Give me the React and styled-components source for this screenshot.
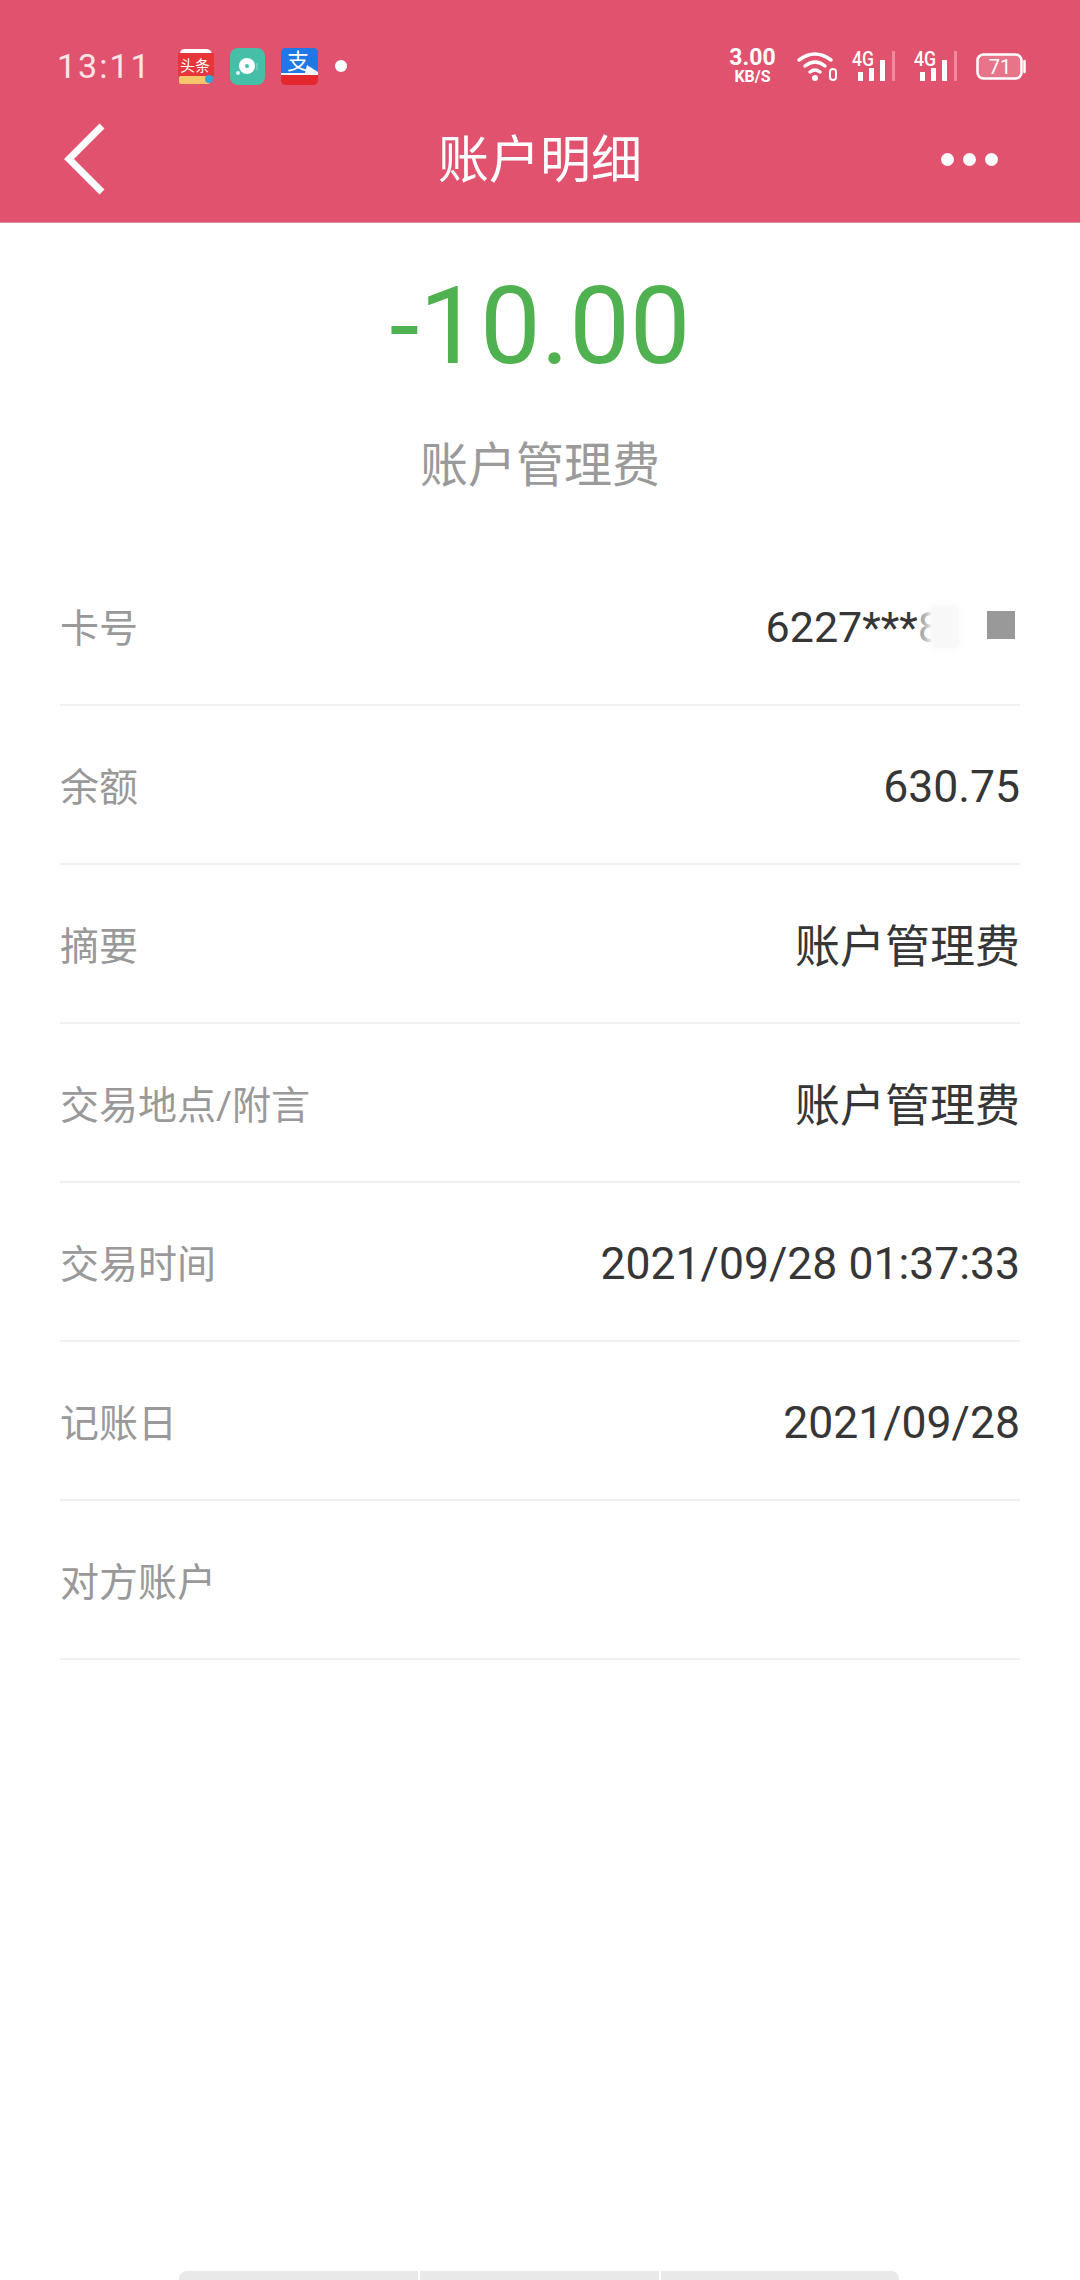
import React from 'react';
import styled, { createGlobalStyle } from 'styled-components';

const GlobalStyle = createGlobalStyle`
  html, body {
    margin: 0;
    padding: 0;
    background: #fff;
    font-family: Roboto, "Noto Sans CJK SC", sans-serif;
  }
`;

const Page = styled.div`
  width: 1080px;
  height: 2280px;
  display: flex;
  flex-direction: column;
  overflow: hidden;
  background: #fff;
`;

const Header = styled.header`
  height: 222px;
  flex: none;
  background: #e0526d;
  color: #fff;
  border-bottom: 1px solid #d0929e;
`;

const StatusBar = styled.div`
  height: 100px;
  box-sizing: border-box;
  padding: 48px 54px 16px 57px;
  display: flex;
  align-items: center;
  justify-content: space-between;
`;

const StatusLeft = styled.div`
  display: flex;
  align-items: center;
  gap: 16px;
`;

const StatusRight = styled.div`
  display: flex;
  align-items: center;
  gap: 19px;
`;

const Clock = styled.span`
  width: 104px;
  font-size: 34px;
  letter-spacing: 2px;
  color: #fbe4e8;
`;

const NotifyDot = styled.span`
  width: 12px;
  height: 12px;
  margin-left: 1px;
  border-radius: 50%;
  background: #fff;
`;

const Speed = styled.div`
  width: 47px;
  margin-right: 2px;
  display: flex;
  flex-direction: column;
  align-items: center;
  font-weight: 700;
`;

const SpeedValue = styled.span`
  font-size: 23px;
  line-height: 22px;
`;

const SpeedUnit = styled.span`
  font-size: 16px;
  line-height: 16px;
`;

const IconSvg = styled.svg`
  overflow: visible;
  flex: none;
`;

const WifiSvg = styled(IconSvg)`
  margin-right: -5px;
`;

const NavBar = styled.nav`
  height: 118px;
  box-sizing: border-box;
  padding: 0 82px;
  display: grid;
  grid-template-columns: 1fr auto 1fr;
  align-items: center;
`;

const BackSvg = styled(IconSvg)`
  margin-left: -19px;
`;

const Title = styled.h1`
  margin: 0;
  font-size: 51px;
  font-weight: 400;
  line-height: 60px;
  transform: translateY(2px);
`;

const Dots = styled.div`
  justify-self: end;
  display: flex;
  gap: 9px;
`;

const Dot = styled.span`
  width: 13px;
  height: 13px;
  border-radius: 50%;
  background: #fff;
`;

const Amount = styled.div`
  margin-top: 43px;
  text-align: center;
  font-size: 108px;
  line-height: 120px;
  color: #4fb150;
`;

const Subject = styled.div`
  margin-top: 50px;
  text-align: center;
  font-size: 48px;
  line-height: 60px;
  color: #9a9a9a;
`;

const Details = styled.div`
  margin: 51px 60px 0;
`;

const Row = styled.div`
  height: 159px;
  box-sizing: border-box;
  padding-top: 3px;
  display: flex;
  align-items: center;
  justify-content: space-between;
  border-bottom: 2px solid #f0f0f0;
`;

const Label = styled.span`
  margin-bottom: 4px;
  font-size: 39px;
  color: #999;
`;

const Value = styled.span`
  margin: ${(p) => (p.$cjk ? '0 0 4px' : '2px 0 0')};
  font-size: ${(p) => (p.$cjk ? 45 : 44.5)}px;
  color: #363636;
`;

const CardNumber = styled.div`
  position: relative;
  display: flex;
  align-items: center;
  color: #363636;
  font-size: 43px;
`;

const Smudge = styled.span`
  position: absolute;
  left: 165px;
  top: 4px;
  width: 28px;
  height: 42px;
  background: #f8f8f8;
  border-radius: 6px;
  box-shadow: 0 0 6px 3px #fbfbfb;
`;

const CardDigit = styled.span`
  margin-right: 45px;
  color: #aaa;
`;

const Mask = styled.span`
  width: 28px;
  height: 28px;
  margin: 0 5px 4px 0;
  background: #999;
`;

const HomeBar = styled.div`
  margin: auto 0 0 179px;
  width: 720px;
  height: 9px;
  flex: none;
  display: grid;
  grid-template-columns: 239px 239px 238px;
  gap: 2px;
`;

const HomeSegment = styled.span`
  background: #e9e9e9;
  &:first-child { border-top-left-radius: 8px; }
  &:last-child { border-top-right-radius: 8px; }
`;

const BackIcon = () => (
  <BackSvg width="44" height="72" viewBox="0 0 44 72">
    <path d="M39 3 L6 36 L39 69" fill="none" stroke="#fff" strokeWidth="7" />
  </BackSvg>
);

const NewsIcon = () => (
  <IconSvg width="37" height="37" viewBox="0 0 37 37">
    <path d="M3 6 Q3 1 8 1 H29 Q34 1 35 6 Z" fill="#fff" />
    <rect x="1" y="5" width="36" height="23" fill="#e8353a" />
    <text x="18" y="23" textAnchor="middle" fontSize="15" fill="#fff" fontFamily='"Noto Sans CJK SC"'>头条</text>
    <rect x="2" y="28" width="31" height="8" rx="2" fill="#f7c46b" />
    <circle cx="32" cy="31" r="4" fill="#2fa6d9" />
  </IconSvg>
);

const MusicIcon = () => (
  <IconSvg width="35" height="37" viewBox="0 0 35 37">
    <rect width="35" height="37" rx="8" fill="#45bfa8" />
    <circle cx="17" cy="18" r="8" fill="#fff" />
    <circle cx="17" cy="18" r="2" fill="#45bfa8" />
    <circle cx="8" cy="25" r="2" fill="#dff5f0" />
    <path d="M27 15 V22" stroke="#8adccb" strokeWidth="1" />
  </IconSvg>
);

const AlipayIcon = () => (
  <IconSvg width="37" height="37" viewBox="0 0 37 37">
    <path d="M0 5 Q0 0 5 0 H32 Q37 0 37 5 V25 H0 Z" fill="#1f78e6" />
    <path d="M0 27 H37 V32 Q37 37 32 37 H5 Q0 37 0 32 Z" fill="#e3282e" />
    <text x="17" y="21" textAnchor="middle" fontSize="22" fill="#fff" fontFamily='"Noto Sans CJK SC"'>支</text>
    <path d="M26 17 L37 24 V27 H0 V25 H24 Z" fill="#f4f7fb" />
  </IconSvg>
);

const WifiIcon = () => (
  <WifiSvg width="41" height="30" viewBox="0 0 41 30" fill="none" stroke="#fff" strokeLinecap="round">
    <path d="M2 9 Q18 -3 34 9" strokeWidth="3.5" />
    <path d="M8 15 Q18 7 28 15" strokeWidth="3.5" />
    <path d="M13 21 Q18 17 23 21" strokeWidth="3.5" />
    <circle cx="18" cy="27" r="3" fill="#fff" stroke="none" />
    <rect x="33" y="18" width="6" height="11" rx="3" strokeWidth="2" />
  </WifiSvg>
);

const SignalIcon = () => (
  <IconSvg width="43" height="30" viewBox="0 0 43 30">
    <text x="0" y="15" fontSize="21" fontWeight="500" fill="#fff" fontFamily="Roboto" textLength="22" lengthAdjust="spacingAndGlyphs">4G</text>
    <rect x="6" y="21" width="5" height="9" fill="#fff" />
    <rect x="17" y="17" width="5" height="13" fill="#fff" />
    <rect x="28" y="9" width="5" height="21" fill="#fff" />
    <rect x="40" y="0" width="3" height="30" fill="#f08a9d" />
  </IconSvg>
);

const BatteryIcon = () => (
  <IconSvg width="50" height="27" viewBox="0 0 50 27">
    <rect x="1.5" y="1.5" width="44" height="24" rx="6" fill="#e77488" stroke="#fff" strokeWidth="2.5" />
    <path d="M48.5 8 V19" stroke="#fff" strokeWidth="2.5" strokeLinecap="round" />
    <text x="24" y="21" textAnchor="middle" fontSize="20" fill="#fff" fontFamily="Roboto">71</text>
  </IconSvg>
);

const rows = [
  { label: '余额', value: '630.75' },
  { label: '摘要', value: '账户管理费', cjk: true },
  { label: '交易地点/附言', value: '账户管理费', cjk: true },
  { label: '交易时间', value: '2021/09/28 01:37:33' },
  { label: '记账日', value: '2021/09/28' },
  { label: '对方账户', value: '' },
];

const App = () => (
  <Page>
    <GlobalStyle />
    <Header>
      <StatusBar>
        <StatusLeft>
          <Clock>13:11</Clock>
          <NewsIcon />
          <MusicIcon />
          <AlipayIcon />
          <NotifyDot />
        </StatusLeft>
        <StatusRight>
          <Speed>
            <SpeedValue>3.00</SpeedValue>
            <SpeedUnit>KB/S</SpeedUnit>
          </Speed>
          <WifiIcon />
          <SignalIcon />
          <SignalIcon />
          <BatteryIcon />
        </StatusRight>
      </StatusBar>
      <NavBar>
        <BackIcon />
        <Title>账户明细</Title>
        <Dots>
          <Dot />
          <Dot />
          <Dot />
        </Dots>
      </NavBar>
    </Header>
    <Amount>-10.00</Amount>
    <Subject>账户管理费</Subject>
    <Details>
      <Row>
        <Label>卡号</Label>
        <CardNumber>
          6227***
          <CardDigit>8</CardDigit>
          <Smudge />
          <Mask />
        </CardNumber>
      </Row>
      {rows.map((r) => (
        <Row key={r.label}>
          <Label>{r.label}</Label>
          <Value $cjk={r.cjk}>{r.value}</Value>
        </Row>
      ))}
    </Details>
    <HomeBar>
      <HomeSegment />
      <HomeSegment />
      <HomeSegment />
    </HomeBar>
  </Page>
);

export default App;
